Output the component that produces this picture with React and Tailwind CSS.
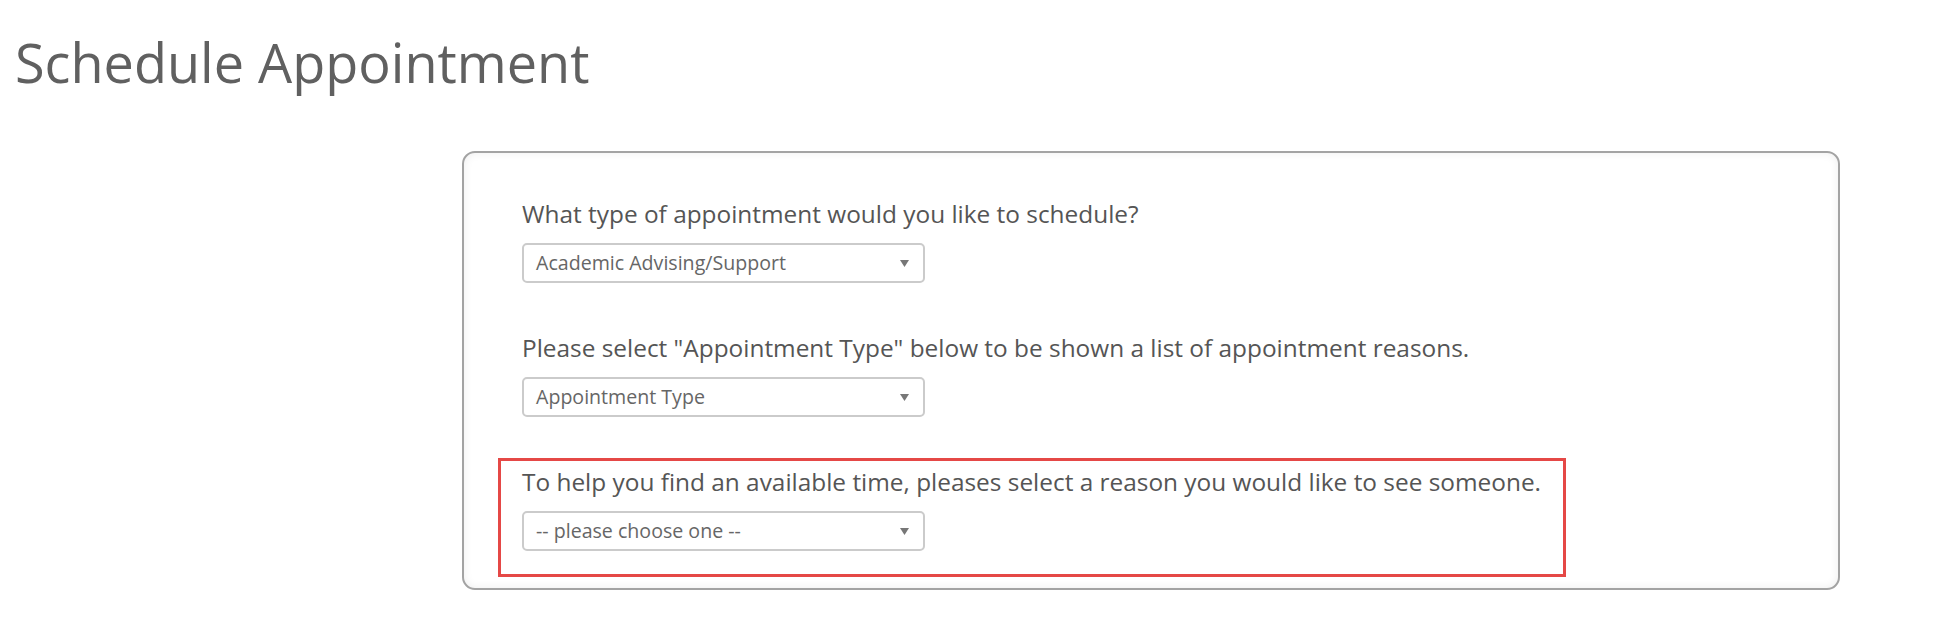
import React from "react";

const groups = [
  {
    label: "What type of appointment would you like to schedule?",
    value: "Academic Advising/Support",
  },
  {
    label: 'Please select "Appointment Type" below to be shown a list of appointment reasons.',
    value: "Appointment Type",
  },
  {
    label:
      "To help you find an available time, pleases select a reason you would like to see someone.",
    value: "-- please choose one --",
    highlight: true,
  },
];

function FakeSelect({ value }) {
  return (
    <div className="flex h-[40px] w-[403px] items-center justify-between rounded-[5px] border-2 border-[#cbcbcb] bg-white pl-[12px] pr-[14px]">
      <span className="text-[19.6px] leading-none text-[#666]">{value}</span>
      <svg width="9" height="7" viewBox="0 0 9 7" className="fill-[#777]">
        <path d="M0 0 L9 0 L4.5 7 Z" />
      </svg>
    </div>
  );
}

export default function App() {
  return (
    <div className="min-h-screen bg-white font-['Open_Sans',sans-serif]">
      {/* Title */}
      <h1 className="pl-[15px] pt-[35px] text-[54px] font-normal leading-none text-[#606060]">
        Schedule Appointment
      </h1>

      {/* Form card */}
      <div className="mt-[62px] pl-[462px] pr-[104px]">
        <div className="flex flex-col gap-[49px] rounded-[13px] border-2 border-[#a3a3a3] bg-white pb-[37px] pl-[58px] pt-[45px] shadow-[inset_0_0_10px_rgba(0,0,0,0.07)]">
          {groups.map((g) => (
            <div key={g.label} className="relative">
              <p className="mb-[14px] text-[24.4px] leading-[31px] text-[#555]">
                {g.label}
              </p>
              <FakeSelect value={g.value} />
              {g.highlight && (
                <div className="pointer-events-none absolute -left-[24px] -top-[8px] -bottom-[26px] w-[1068px] border-[3px] border-[#e54846]" />
              )}
            </div>
          ))}
        </div>
      </div>
    </div>
  );
}
